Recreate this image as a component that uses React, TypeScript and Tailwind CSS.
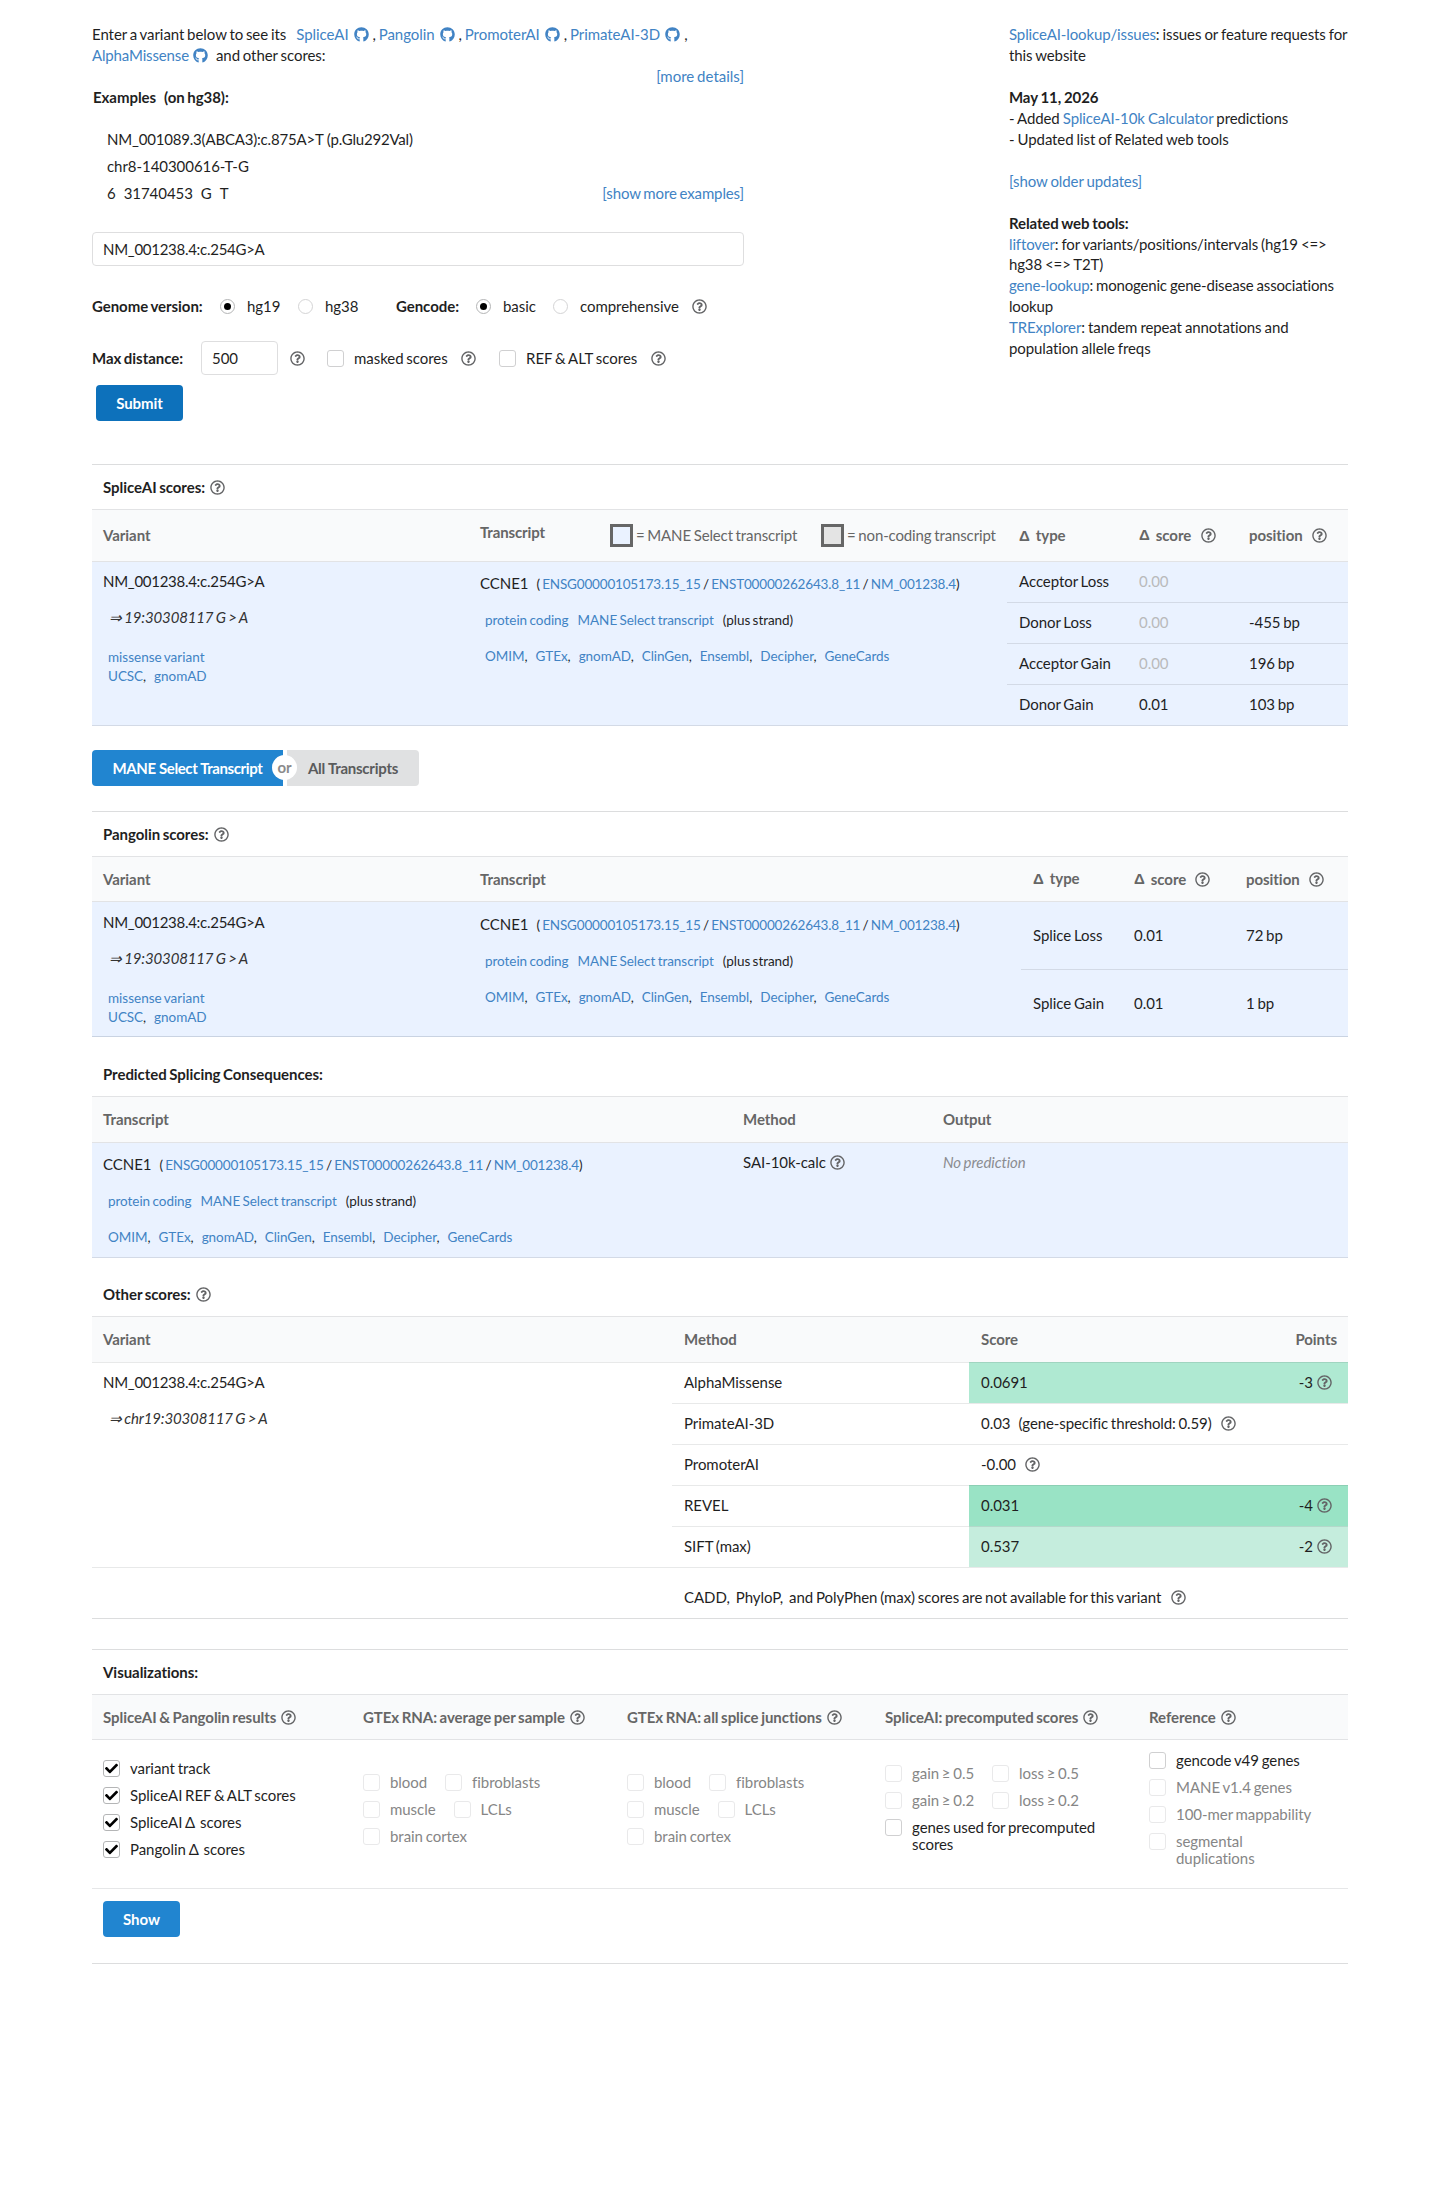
import type { ReactNode } from 'react'
import { FaGithub, FaRegQuestionCircle } from 'react-icons/fa'

const GITHUB_TOOLS = ['SpliceAI', 'Pangolin', 'PromoterAI', 'PrimateAI-3D']
const GENE_LINKS = ['OMIM', 'GTEx', 'gnomAD', 'ClinGen', 'Ensembl', 'Decipher', 'GeneCards']

function A({ children }: { children: ReactNode }) {
  return <a href="#" className="text-[#4183c4]">{children}</a>
}

function Help({ className = '' }: { className?: string }) {
  return <FaRegQuestionCircle className={`inline-block w-[15px] h-[15px] shrink-0 text-[#646567] ${className}`} />
}

function Github({ className = '' }: { className?: string }) {
  return <FaGithub className={`inline-block w-[15px] h-[15px] shrink-0 align-[-2px] text-[#4183c4] ${className}`} />
}

function Delta() {
  return <span className="font-['Liberation_Sans',sans-serif]">Δ</span>
}

function Radio({ checked = false }: { checked?: boolean }) {
  return (
    <span className={`flex items-center justify-center w-[15px] h-[15px] rounded-full border shrink-0 ${checked ? 'border-[#b4b5b6]' : 'border-[#d4d4d5]'}`}>
      {checked && <span className="w-[7px] h-[7px] rounded-full bg-black" />}
    </span>
  )
}

function Check({ checked = false, disabled = false }: { checked?: boolean; disabled?: boolean }) {
  return (
    <span className={`flex items-center justify-center w-[17px] h-[17px] rounded-[3px] border shrink-0 ${checked ? 'border-[#b4b5b6]' : disabled ? 'border-[#e9e9ea]' : 'border-[#d0d0d1]'}`}>
      {checked && (
        <svg viewBox="0 0 512 512" className="w-[13px] h-[13px]">
          <path fill="#000" d="M173.898 439.404l-166.4-166.4c-9.997-9.997-9.997-26.206 0-36.204l36.203-36.204c9.997-9.998 26.207-9.998 36.204 0L192 312.69 432.095 72.596c9.997-9.997 26.207-9.997 36.204 0l36.203 36.204c9.997 9.997 9.997 26.206 0 36.204l-294.4 294.401c-9.998 9.997-26.207 9.997-36.204-.001z" />
        </svg>
      )}
    </span>
  )
}

function Option({ label, checked, disabled }: { label: ReactNode; checked?: boolean; disabled?: boolean }) {
  return (
    <div className="flex gap-[10px]">
      <Check checked={checked} disabled={disabled} />
      <span className={`leading-[17px] whitespace-nowrap ${disabled ? 'text-[#868686]' : ''}`}>{label}</span>
    </div>
  )
}

function SectionTitle({ children }: { children: ReactNode }) {
  return <div className="flex items-center gap-[5px] h-[44px] pl-[11px] font-bold">{children}</div>
}

function VariantName({ chr, children }: { chr: string; children?: ReactNode }) {
  return (
    <div className="pl-[11px] pt-[11px]">
      <div className="leading-[18px] tracking-[-0.28px]">NM_001238.4:c.254G&gt;A</div>
      <div className="mt-[18px] pl-[6px] leading-[18px] italic text-[#333] tracking-[-0.14px]">⇒ {chr}:30308117 G &gt; A</div>
      {children}
    </div>
  )
}

function VariantCell() {
  return (
    <VariantName chr="19">
      <div className="mt-[22px] pl-[5px] text-[13.5px] leading-[19px] tracking-normal"><A>missense variant</A></div>
      <div className="pl-[5px] text-[13.5px] leading-[19px]"><A>UCSC</A>,<span className="ml-[8px]"><A>gnomAD</A></span></div>
    </VariantName>
  )
}

function TranscriptCell() {
  return (
    <div className="text-[13.5px] leading-[18px] whitespace-nowrap">
      <div>
        <span className="text-[15px]">CCNE1</span>
        <span className="ml-2 tracking-[-0.17px]">( <A>ENSG00000105173.15_15</A> / <A>ENST00000262643.8_11</A> / <A>NM_001238.4</A>)</span>
      </div>
      <div className="mt-[18px] pl-[5px]"><A>protein coding</A><span className="ml-[9px]"><A>MANE Select transcript</A></span><span className="ml-[9px]">(plus strand)</span></div>
      <div className="mt-[18px] pl-[5px] flex gap-2">
        {GENE_LINKS.map((l, i) => (
          <span key={l}><A>{l}</A>{i < GENE_LINKS.length - 1 && ','}</span>
        ))}
      </div>
    </div>
  )
}

const HEAD = 'flex bg-[#f9fafb] border-[#e2e3e5] font-bold text-[#666] items-center'

const spliceRows = [
  ['Acceptor Loss', '0.00', ''],
  ['Donor Loss', '0.00', '-455 bp'],
  ['Acceptor Gain', '0.00', '196 bp'],
  ['Donor Gain', '0.01', '103 bp'],
]

const otherRows = [
  { method: 'AlphaMissense', score: '0.0691', points: '-3', bg: 'bg-[#afe9d2]' },
  { method: 'PrimateAI-3D', score: '0.03', note: '(gene-specific threshold: 0.59)', bg: '' },
  { method: 'PromoterAI', score: '-0.00', note: '', bg: '' },
  { method: 'REVEL', score: '0.031', points: '-4', bg: 'bg-[#99e3c5]' },
  { method: 'SIFT (max)', score: '0.537', points: '-2', bg: 'bg-[#c5eddd]' },
]

function Intro() {
  return (
    <div className="w-[652px]">
      <div className="leading-[21px] whitespace-nowrap">
        <span className="mr-[10px]">Enter a variant below to see its</span>
        {GITHUB_TOOLS.map(t => (
          <span key={t}><A>{t}</A><Github className="ml-[5px] mr-[4px]" />, </span>
        ))}
      </div>
      <div className="leading-[21px]"><span className="tracking-[-0.15px]"><A>AlphaMissense</A></span><Github className="ml-1 mr-2" />and other scores:</div>
      <div className="leading-[21px] text-right tracking-normal"><A>[more details]</A></div>
      <div className="leading-[21px] font-bold pl-px">Examples<span className="ml-2">(on hg38):</span></div>
      <div className="mt-[18px] pl-[15px] leading-[27px]">
        <div className="tracking-[-0.19px] [word-spacing:0px]">NM_001089.3(ABCA3):c.875A&gt;T (p.Glu292Val)</div>
        <div>chr8-140300616-T-G</div>
        <div className="flex justify-between">
          <span className="flex gap-2"><span>6</span><span>31740453</span><span>G</span><span>T</span></span>
          <span className="tracking-[-0.12px]"><A>[show more examples]</A></span>
        </div>
      </div>
      <div className="mt-[25px] h-[34px] border border-[#dededf] rounded-[4px] px-[10px] leading-[32px] tracking-[-0.28px]">NM_001238.4:c.254G&gt;A</div>
      <div className="mt-[24px] h-[32px] flex items-center">
        <b className="w-[128px]">Genome version:</b>
        <Radio checked /><span className="ml-[12px] w-[51px]">hg19</span>
        <Radio /><span className="ml-[12px] w-[71px]">hg38</span>
        <b className="w-[80px]">Gencode:</b>
        <Radio checked /><span className="ml-[12px] w-[50px]">basic</span>
        <Radio /><span className="ml-[12px] w-[112px]">comprehensive</span>
        <Help />
      </div>
      <div className="mt-[19px] h-[34px] flex items-center">
        <b className="w-[109px]">Max distance:</b>
        <span className="w-[77px] h-[34px] border border-[#dededf] rounded-[4px] px-[10px] leading-[32px]">500</span>
        <Help className="ml-[12px] mr-[22px]" />
        <Check /><span className="ml-[10px] w-[107px]">masked scores</span><Help className="mr-[23px]" />
        <Check /><span className="ml-[10px] w-[125px] tracking-normal">REF &amp; ALT scores</span><Help />
      </div>
      <button className="mt-[10px] ml-1 w-[87px] h-[36px] block rounded-[4px] bg-[#0d71bb] text-white font-bold">Submit</button>
    </div>
  )
}

function News() {
  return (
    <div className="w-[339px] leading-[20.95px] whitespace-nowrap tracking-[-0.11px] [word-spacing:-0.6px]">
      <div><A>SpliceAI-lookup/issues</A>: issues or feature requests for<br />this website</div>
      <br />
      <div><b>May 11, 2026</b></div>
      <div>- Added <A>SpliceAI-10k Calculator</A> predictions</div>
      <div>- Updated list of Related web tools</div>
      <br />
      <div><A>[show older updates]</A></div>
      <br />
      <div><b>Related web tools:</b></div>
      <div className="tracking-[-0.15px]"><A>liftover</A>: for variants/positions/intervals (hg19 &lt;=&gt;<br />hg38 &lt;=&gt; T2T)</div>
      <div className="tracking-[-0.18px]"><A>gene-lookup</A>: monogenic gene-disease associations<br />lookup</div>
      <div><A>TRExplorer</A>: tandem repeat annotations and<br />population allele freqs</div>
    </div>
  )
}

export default function App() {
  return (
    <div className="min-h-[2200px] bg-white pl-[92px] font-['Lato',sans-serif] text-[15px] tracking-[-0.05px] [word-spacing:-1px] text-[#1f1f1f]">
      <div className="w-[1256px]">
        <div className="flex justify-between pt-[24px] h-[464px]">
          <Intro />
          <News />
        </div>

        {/* SpliceAI */}
        <div className="border-t border-[#dcddde]">
          <SectionTitle>SpliceAI scores: <Help /></SectionTitle>
          <div className={`${HEAD} border-y h-[53px]`}>
            <div className="w-[388px] pl-[11px]">Variant</div>
            <div className="w-[527px] flex items-center tracking-[-0.13px]">
              <span className="w-[130px] -mt-[6px]">Transcript</span>
              <span className="w-[23px] h-[23px] border-[3px] border-[#666] bg-[#eaf2ff]" />
              <span className="ml-[3px] w-[185px] font-normal">= MANE Select transcript</span>
              <span className="w-[23px] h-[23px] border-[3px] border-[#666] bg-[#e4e4e4]" />
              <span className="ml-[3px] font-normal whitespace-nowrap">= non-coding transcript</span>
            </div>
            <div className="w-[121px] pl-[12px]"><Delta /><span className="ml-[6px]">type</span></div>
            <div className="w-[109px] pl-[11px] flex items-center"><Delta /><span className="ml-[6px] mr-[10px]">score</span><Help /></div>
            <div className="pl-[12px] flex items-center"><span className="mr-[9px]">position</span><Help /></div>
          </div>
          <div className="flex h-[164px] bg-[#eaf2ff] border-b border-[#d3dae6]">
            <div className="w-[388px] -mt-px"><VariantCell /></div>
            <div className="w-[527px] pt-[12px]"><TranscriptCell /></div>
            <div className="flex-1">
              {spliceRows.map(([type, score, pos], i) => (
                <div key={type} className={`flex items-center pb-px ${i < 3 ? 'h-[41px] border-b border-[#d3dae6]' : 'h-[40px]'}`}>
                  <span className="w-[121px] pl-[12px]">{type}</span>
                  <span className={`w-[109px] pl-[11px] ${score === '0.00' ? 'text-[#b9babb]' : ''}`}>{score}</span>
                  <span className="pl-[12px]">{pos}</span>
                </div>
              ))}
            </div>
          </div>
        </div>

        <div className="relative flex gap-1 mt-[24px] font-bold">
          <button className="w-[191px] h-[36px] rounded-l-[4px] bg-[#2185d0] text-white tracking-[-0.4px]">MANE Select Transcript</button>
          <button className="w-[132px] h-[36px] rounded-r-[4px] bg-[#e0e1e2] text-[#5a5b5c] tracking-[-0.25px]">All Transcripts</button>
          <span className="absolute left-[180px] top-[5px] w-[25px] h-[25px] rounded-full bg-white text-[#8b8b8b] text-center leading-[25px]">or</span>
        </div>

        {/* Pangolin */}
        <div className="mt-[25px] border-t border-[#dcddde]">
          <SectionTitle>Pangolin scores: <Help /></SectionTitle>
          <div className={`${HEAD} border-y h-[46px]`}>
            <div className="w-[388px] pl-[11px]">Variant</div>
            <div className="w-[541px]">Transcript</div>
            <div className="w-[102px] pl-[12px]"><Delta /><span className="ml-[6px]">type</span></div>
            <div className="w-[112px] pl-[11px] flex items-center"><Delta /><span className="ml-[6px] mr-[9px]">score</span><Help /></div>
            <div className="pl-[11px] flex items-center"><span className="mr-[9px]">position</span><Help /></div>
          </div>
          <div className="flex h-[135px] bg-[#eaf2ff] border-b border-[#c9d3e2]">
            <div className="w-[388px]"><VariantCell /></div>
            <div className="w-[541px] pt-[13px]"><TranscriptCell /></div>
            <div className="flex-1">
              {[['Splice Loss', '72 bp'], ['Splice Gain', '1 bp']].map(([type, pos], i) => (
                <div key={type} className={`flex items-center ${i === 0 ? 'h-[68px] border-b border-[#d3dae6]' : 'h-[66px]'}`}>
                  <span className="w-[102px] pl-[12px]">{type}</span>
                  <span className="w-[112px] pl-[11px]">0.01</span>
                  <span className="pl-[11px]">{pos}</span>
                </div>
              ))}
            </div>
          </div>
        </div>

        {/* Splicing consequences */}
        <div className="pt-[16px]">
          <div className="h-[43px] flex items-center pl-[11px] font-bold">Predicted Splicing Consequences:</div>
          <div className={`${HEAD} border-y h-[47px]`}>
            <div className="w-[651px] pl-[11px]">Transcript</div>
            <div className="w-[200px]">Method</div>
            <div>Output</div>
          </div>
          <div className="flex h-[115px] bg-[#eaf2ff] border-b border-[#d3dae6]">
            <div className="w-[651px] pl-[11px] pt-[12px]"><TranscriptCell /></div>
            <div className="w-[200px] h-[39px] flex items-center gap-1">SAI-10k-calc <Help /></div>
            <div className="h-[39px] flex items-center italic text-[#8a8c90]">No prediction</div>
          </div>
        </div>

        {/* Other scores */}
        <div className="pt-[14px]">
          <SectionTitle>Other scores: <Help /></SectionTitle>
          <div className={`${HEAD} border-t h-[46px]`}>
            <div className="w-[592px] pl-[11px]">Variant</div>
            <div className="w-[297px]">Method</div>
            <div className="flex-1">Score</div>
            <div className="pr-[11px]">Points</div>
          </div>
          <div className="flex border-b border-[#222426]/10">
            <div className="w-[580px] border-t border-[#222426]/10"><div className="-mt-px"><VariantName chr="chr19" /></div></div>
            <div className="flex-1">
              {otherRows.map(r => (
                <div key={r.method} className="flex h-[41px]">
                  <div className="w-[297px] pl-[12px] pb-px flex items-center border-t border-[#222426]/10">{r.method}</div>
                  <div className={`flex-1 pl-[12px] pr-[16px] pb-px flex items-center border-t border-[#222426]/10 ${r.bg}`}>
                    {r.score}
                    {r.note && <span className="ml-2 tracking-[-0.1px]">{r.note}</span>}
                    {!r.points && <Help className="ml-[9px]" />}
                    {r.points && <span className="ml-auto flex items-center gap-1">{r.points} <Help /></span>}
                  </div>
                </div>
              ))}
            </div>
          </div>
          <div className="h-[51px] pt-[8px] pl-[592px] border-b border-[#dcddde] flex items-center">
            CADD,<span className="mx-[6px]">PhyloP,</span>and PolyPhen (max) scores are not available for this variant<Help className="ml-[10px]" />
          </div>
        </div>

        {/* Visualizations */}
        <div className="mt-[30px] border-y border-[#dcddde]">
          <SectionTitle>Visualizations:</SectionTitle>
          <div className={`${HEAD} border-y h-[46px] pl-[11px]`}>
            <div className="w-[260px] flex items-center gap-[5px]">SpliceAI &amp; Pangolin results <Help /></div>
            <div className="w-[264px] flex items-center gap-[5px]">GTEx RNA: average per sample <Help /></div>
            <div className="w-[258px] flex items-center gap-[5px]">GTEx RNA: all splice junctions <Help /></div>
            <div className="w-[264px] flex items-center gap-[5px]">SpliceAI: precomputed scores <Help /></div>
            <div className="flex items-center gap-[5px]">Reference <Help /></div>
          </div>
          <div className="flex h-[149px] pl-[11px] border-b border-[#e6e7e8]">
            <div className="w-[260px] pt-[20px] flex flex-col gap-[10px]">
              <Option checked label="variant track" />
              <Option checked label="SpliceAI REF & ALT scores" />
              <Option checked label={<>SpliceAI Δ <span className="ml-[2px]">scores</span></>} />
              <Option checked label={<>Pangolin Δ <span className="ml-[2px]">scores</span></>} />
            </div>
            {[264, 258].map(w => (
              <div key={w} style={{ width: w }} className="pt-[34px] flex flex-col gap-[10px]">
                <div className="flex gap-[18px]"><Option disabled label="blood" /><Option disabled label="fibroblasts" /></div>
                <div className="flex gap-[18px]"><Option disabled label="muscle" /><Option disabled label="LCLs" /></div>
                <Option disabled label="brain cortex" />
              </div>
            ))}
            <div className="w-[264px] pt-[25px] flex flex-col gap-[10px]">
              <div className="flex gap-[18px]"><Option disabled label="gain ≥ 0.5" /><Option disabled label="loss ≥ 0.5" /></div>
              <div className="flex gap-[18px]"><Option disabled label="gain ≥ 0.2" /><Option disabled label="loss ≥ 0.2" /></div>
              <Option label={<>genes used for precomputed<br />scores</>} />
            </div>
            <div className="pt-[12px] flex flex-col gap-[10px]">
              <Option label="gencode v49 genes" />
              <Option disabled label="MANE v1.4 genes" />
              <Option disabled label="100-mer mappability" />
              <Option disabled label={<>segmental<br />duplications</>} />
            </div>
          </div>
          <div className="pt-[12px] pb-[26px] pl-[11px]">
            <button className="block w-[77px] h-[36px] rounded-[4px] bg-[#2185d0] text-white font-bold">Show</button>
          </div>
        </div>
      </div>
    </div>
  )
}
